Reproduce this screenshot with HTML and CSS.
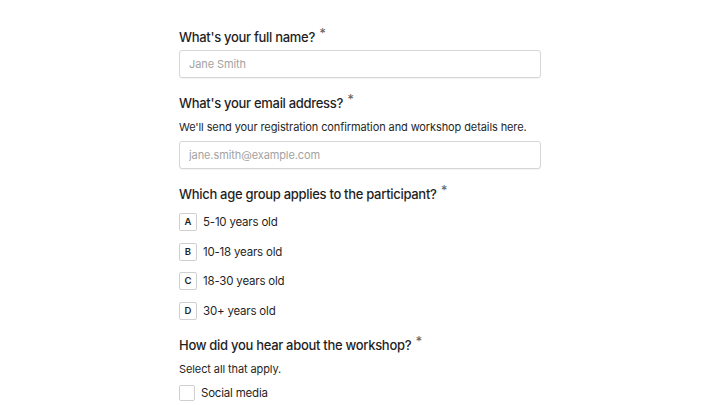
FILE: index.html
```html
<!DOCTYPE html>
<html lang="en">
<head>
    <meta charset="UTF-8">
    <meta name="viewport" content="width=device-width, initial-scale=1.0">
    <title>Workshop Registration</title>
    <link rel="stylesheet" href="styles.css">
</head>
<body>
    <form class="form">
        <div class="field">
            <label class="question" for="name">What's your full name? <span class="req">*</span></label>
            <input id="name" class="text-input" type="text" placeholder="Jane Smith">
        </div>

        <div class="field">
            <label class="question" for="email">What's your email address? <span class="req">*</span></label>
            <p class="hint">We'll send your registration confirmation and workshop details here.</p>
            <input id="email" class="text-input" type="email" placeholder="jane.smith@example.com">
        </div>

        <div class="field">
            <p class="question">Which age group applies to the participant? <span class="req">*</span></p>
            <div class="choices">
                <label class="choice"><span class="key">A</span>5-10 years old</label>
                <label class="choice"><span class="key">B</span>10-18 years old</label>
                <label class="choice"><span class="key">C</span>18-30 years old</label>
                <label class="choice"><span class="key">D</span>30+ years old</label>
            </div>
        </div>

        <div class="field">
            <p class="question">How did you hear about the workshop? <span class="req">*</span></p>
            <p class="hint">Select all that apply.</p>
            <div class="checks">
                <label class="check"><span class="box"></span>Social media</label>
            </div>
        </div>
    </form>
</body>
</html>
```

FILE: styles.css
```css
body {
    margin: 0;
    background-color: #ffffff;
    font-family: Inter, "Noto Sans", Arial, sans-serif;
    color: #1f1f1f;
}

.form {
    width: 362px;
    margin: 0 auto;
    padding-top: 27px;
}

.field {
    margin-bottom: 15px;
}

.question {
    display: block;
    margin: 0 0 3px;
    font-size: 13px;
    font-weight: 500;
    line-height: 20px;
    letter-spacing: -0.3px;
}

.req {
    position: relative;
    top: -4px;
    margin-left: 1px;
    font-size: 13px;
    color: #6b6b6b;
}

.hint {
    margin: 5px 0 5px;
    font-size: 11px;
    line-height: 18px;
    letter-spacing: -0.1px;
    color: #262626;
}

.text-input {
    display: block;
    box-sizing: border-box;
    width: 100%;
    height: 28px;
    padding: 0 9px;
    border: 1px solid #d6d6d6;
    border-radius: 3px;
    box-shadow: 0 1px 1px rgba(0, 0, 0, 0.05);
    font-family: inherit;
    font-size: 11px;
    letter-spacing: -0.1px;
    color: #1f1f1f;
}

.text-input::placeholder {
    color: #a3a3a3;
}

.choices {
    display: flex;
    flex-direction: column;
    gap: 11.7px;
    padding-top: 6px;
}

.choice {
    display: flex;
    align-items: center;
    gap: 6px;
    font-size: 11.5px;
    line-height: 18px;
    letter-spacing: -0.2px;
}

.key {
    display: flex;
    align-items: center;
    justify-content: center;
    box-sizing: border-box;
    width: 18px;
    height: 18px;
    border: 1px solid #cfcfcf;
    border-radius: 2px;
    font-size: 9.5px;
    font-weight: 600;
    letter-spacing: 0;
}

.checks {
    padding-top: 2px;
}

.check {
    display: flex;
    align-items: center;
    gap: 6px;
    font-size: 11.5px;
    line-height: 16px;
    letter-spacing: -0.2px;
}

.box {
    box-sizing: border-box;
    width: 16px;
    height: 16px;
    border: 1px solid #cfcfcf;
    border-radius: 2px;
}
```
